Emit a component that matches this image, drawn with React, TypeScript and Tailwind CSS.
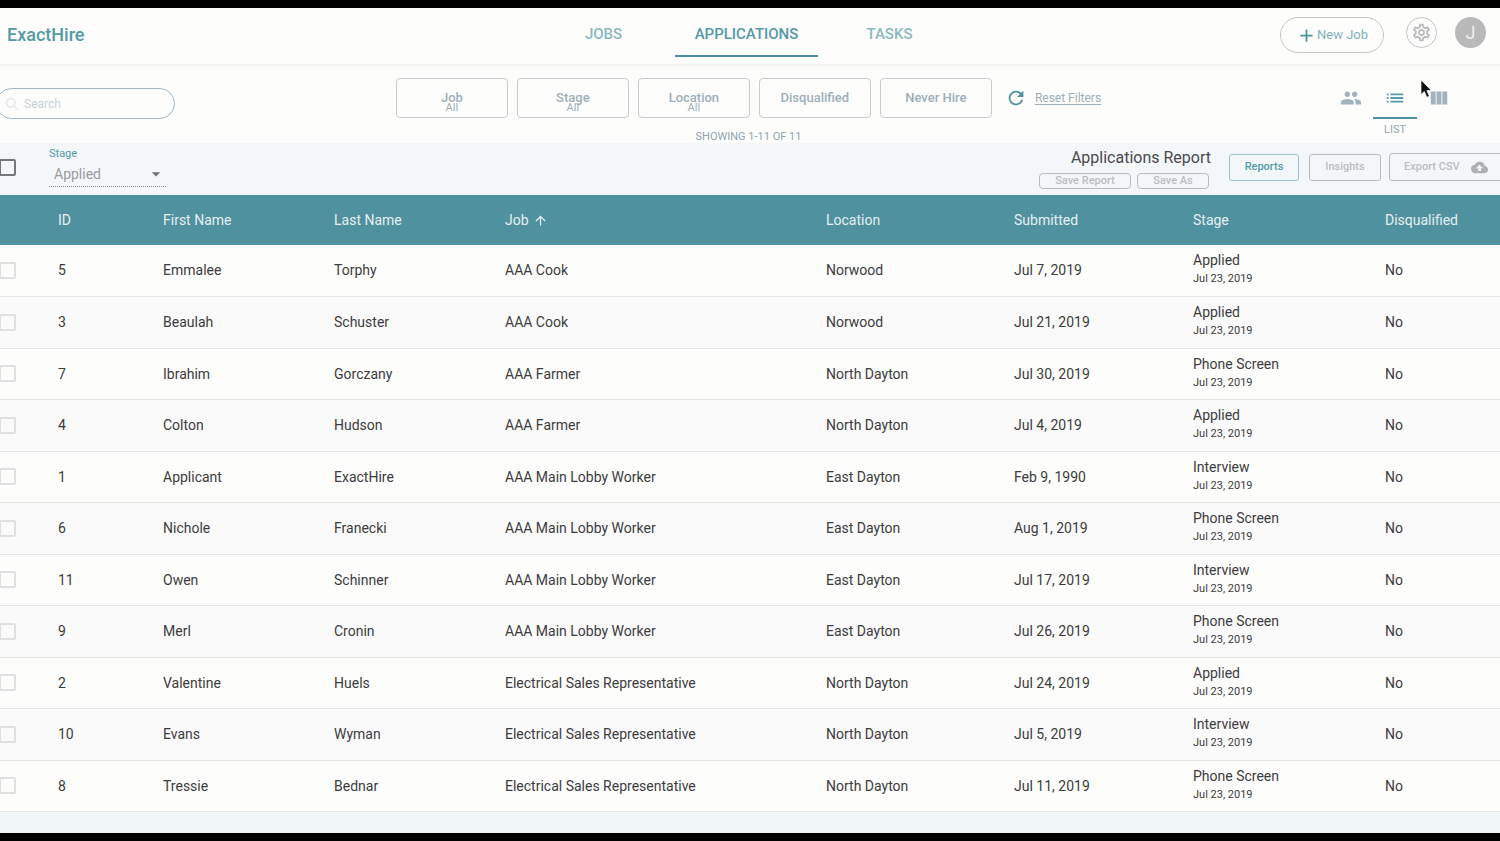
import React from "react";
import {
  MdAdd,
  MdArrowDropDown,
  MdArrowUpward,
  MdBackup,
  MdList,
  MdOutlineSettings,
  MdPeople,
  MdRefresh,
  MdViewColumn,
} from "react-icons/md";
import { IoIosSearch } from "react-icons/io";

type Application = {
  id: number;
  first: string;
  last: string;
  job: string;
  location: string;
  submitted: string;
  stage: string;
};

const COOK = "AAA Cook";
const FARMER = "AAA Farmer";
const LOBBY = "AAA Main Lobby Worker";
const SALES = "Electrical Sales Representative";

const applications: Application[] = [
  { id: 5, first: "Emmalee", last: "Torphy", job: COOK, location: "Norwood", submitted: "Jul 7, 2019", stage: "Applied" },
  { id: 3, first: "Beaulah", last: "Schuster", job: COOK, location: "Norwood", submitted: "Jul 21, 2019", stage: "Applied" },
  { id: 7, first: "Ibrahim", last: "Gorczany", job: FARMER, location: "North Dayton", submitted: "Jul 30, 2019", stage: "Phone Screen" },
  { id: 4, first: "Colton", last: "Hudson", job: FARMER, location: "North Dayton", submitted: "Jul 4, 2019", stage: "Applied" },
  { id: 1, first: "Applicant", last: "ExactHire", job: LOBBY, location: "East Dayton", submitted: "Feb 9, 1990", stage: "Interview" },
  { id: 6, first: "Nichole", last: "Franecki", job: LOBBY, location: "East Dayton", submitted: "Aug 1, 2019", stage: "Phone Screen" },
  { id: 11, first: "Owen", last: "Schinner", job: LOBBY, location: "East Dayton", submitted: "Jul 17, 2019", stage: "Interview" },
  { id: 9, first: "Merl", last: "Cronin", job: LOBBY, location: "East Dayton", submitted: "Jul 26, 2019", stage: "Phone Screen" },
  { id: 2, first: "Valentine", last: "Huels", job: SALES, location: "North Dayton", submitted: "Jul 24, 2019", stage: "Applied" },
  { id: 10, first: "Evans", last: "Wyman", job: SALES, location: "North Dayton", submitted: "Jul 5, 2019", stage: "Interview" },
  { id: 8, first: "Tressie", last: "Bednar", job: SALES, location: "North Dayton", submitted: "Jul 11, 2019", stage: "Phone Screen" },
];

const filters: { label: string; value?: string }[] = [
  { label: "Job", value: "All" },
  { label: "Stage", value: "All" },
  { label: "Location", value: "All" },
  { label: "Disqualified" },
  { label: "Never Hire" },
];

function Header() {
  return (
    <header className="grid grid-cols-[1fr_auto_1fr] border-b-2 border-[#f5f5f5] pr-[14px] pl-[7px]">
      <a href="#home" className="mt-4 text-lg leading-[22px] font-medium text-[#559aa8]">
        ExactHire
      </a>
      <nav className="grid grid-cols-[143px_143px_143px] text-center text-[15px] leading-5 font-medium text-[#8ab9c2]">
        <a href="#jobs" className="pt-4">
          JOBS
        </a>
        <a href="#applications" className="h-[49px] border-b-2 border-[#4d919f] pt-4 text-[#559aa8]">
          APPLICATIONS
        </a>
        <a href="#tasks" className="pt-4">
          TASKS
        </a>
      </nav>
      <div className="mt-[9px] mb-[11px] flex items-start justify-end">
        <button className="mr-[22px] flex h-9 w-[104px] items-center justify-center rounded-full border border-[#c6c6c8] text-[13px] text-[#7fb1bb]">
          <MdAdd className="size-[21px] text-[#4d919f]" />
          <span>New Job</span>
        </button>
        <button
          aria-label="Settings"
          className="mr-[18px] flex size-[31px] items-center justify-center rounded-full border border-[#c6c6c8] text-[#b9b9bb]"
        >
          <MdOutlineSettings className="size-[21px]" />
        </button>
        <button className="size-[31px] rounded-full bg-[#b9b9b9] text-lg text-[#f0f0f0]">J</button>
      </div>
    </header>
  );
}

function FilterBar() {
  return (
    <section className="grid grid-cols-[1fr_auto_1fr] pt-3 pr-[3px] text-[#90a4b0]">
      <label className="mt-[10px] -ml-1 flex h-[31px] w-[179px] items-center gap-1 rounded-full border border-[#9fb5c3] pl-[7px]">
        <IoIosSearch className="size-4 text-[#dde4ea]" />
        <input
          type="text"
          aria-label="Search"
          placeholder="Search"
          className="w-32 bg-transparent text-xs outline-none placeholder:text-[#c8d2da]"
        />
      </label>
      <div>
        <div className="flex items-center gap-[9px]">
          {filters.map((f) => (
            <button
              key={f.label}
              className="flex h-10 w-28 flex-col items-center justify-center rounded border border-[#cbcbcf] text-[13px] leading-[10px] font-medium text-[#9dafba]"
            >
              <span>{f.label}</span>
              {f.value && <span className="-mb-[10px] text-[11px] leading-[10px] font-normal">{f.value}</span>}
            </button>
          ))}
          <button className="ml-1 flex items-center gap-2 text-xs text-[#9dafba]">
            <MdRefresh className="size-[22px] text-[#4d919f]" />
            <span className="border-b border-[#9dafba] leading-3">Reset Filters</span>
          </button>
        </div>
        <p className="pt-3 text-center text-[11px] leading-[13px]">SHOWING 1-11 OF 11</p>
      </div>
      <div className="flex justify-end pr-9 text-[#a1b3be]">
        <button aria-label="People view" className="flex h-10 w-11 items-center justify-center">
          <MdPeople className="size-[22px]" />
        </button>
        <button className="flex w-11 flex-col items-center">
          <span className="flex h-[41px] w-full items-center justify-center border-b-2 border-[#4d919f] text-[#559aa8]">
            <MdList className="size-[22px]" />
          </span>
          <span className="mt-[5px] text-[11px] leading-3 text-[#90a4b0]">LIST</span>
        </button>
        <button aria-label="Board view" className="flex h-10 w-11 items-center justify-center">
          <MdViewColumn className="size-[22px]" />
        </button>
      </div>
    </section>
  );
}

function ReportBar() {
  return (
    <section className="flex h-[52px] items-start justify-between overflow-hidden bg-[#f4f7fa]">
      <div className="flex">
        <input
          type="checkbox"
          aria-label="Select all"
          className="mt-4 -ml-px size-[17px] appearance-none rounded-[2px] border-2 border-[#77777a]"
        />
        <div className="ml-[33px] w-[117px] border-b border-dotted border-[#8d8d90] pt-1">
          <label htmlFor="stage" className="block text-[11px] leading-[14px] text-[#559aa8]">
            Stage
          </label>
          <div className="grid items-center">
            <select
              id="stage"
              className="col-start-1 row-start-1 w-full appearance-none bg-transparent pt-px pl-[5px] text-sm leading-6 text-[#9a9a9d] outline-none"
            >
              <option>Applied</option>
              <option>Interview</option>
              <option>Phone Screen</option>
            </select>
            <MdArrowDropDown className="pointer-events-none col-start-1 row-start-1 size-5 justify-self-end text-[#6f6f72]" />
          </div>
        </div>
      </div>
      <div className="-mr-1 flex items-start text-[11px] font-medium text-[#bcbcbf]">
        <div className="mr-[18px] flex flex-col items-end pt-1">
          <h1 className="text-base leading-[21px] font-normal text-[#4a4a4d]">Applications Report</h1>
          <div className="mt-[5px] flex gap-[6px] pr-[2px] leading-[14px]">
            <button className="h-4 w-[92px] rounded border border-[#bcbcbf]">Save Report</button>
            <button className="h-4 w-[72px] rounded border border-[#bcbcbf]">Save As</button>
          </div>
        </div>
        <button className="mt-[11px] mr-[10px] h-[27px] w-[70px] rounded-[3px] border border-[#9cc4cd] text-[#559aa8]">
          Reports
        </button>
        <button className="mt-[11px] mr-2 h-[27px] w-[72px] rounded-[3px] border border-[#bcbcbf]">Insights</button>
        <button className="mt-[10px] flex h-7 w-[115px] items-center gap-[11px] rounded-[3px] border border-[#bcbcbf] pl-[14px]">
          Export CSV
          <MdBackup className="size-[17px] text-[#b0b0b2]" />
        </button>
      </div>
    </section>
  );
}

function ApplicationsTable() {
  return (
    <table className="w-full table-fixed border-collapse text-left text-sm text-[#3c3c3e]">
      <colgroup>
        <col className="w-[58px]" />
        <col className="w-[105px]" />
        <col className="w-[171px]" />
        <col className="w-[171px]" />
        <col className="w-[321px]" />
        <col className="w-[188px]" />
        <col className="w-[179px]" />
        <col className="w-[192px]" />
        <col className="w-[115px]" />
      </colgroup>
      <thead>
        <tr className="h-[50px] bg-[#4f919f] text-[#e6f0f2] *:p-0 *:font-normal">
          <td />
          <th>ID</th>
          <th>First Name</th>
          <th>Last Name</th>
          <th aria-sort="ascending">
            <span className="flex items-center gap-1">
              Job
              <MdArrowUpward className="size-[15px]" />
            </span>
          </th>
          <th>Location</th>
          <th>Submitted</th>
          <th>Stage</th>
          <th>Disqualified</th>
        </tr>
      </thead>
      <tbody>
        {applications.map((a) => (
          <tr
            key={a.id}
            className="border-b border-[#e6e6e7] *:p-0 odd:h-[51px] odd:bg-[#fdfdfb] even:h-[52px] even:bg-[#fafafa]"
          >
            <td>
              <input
                type="checkbox"
                aria-label={`Select ${a.first} ${a.last}`}
                className="-ml-px block size-[17px] appearance-none rounded-[2px] border-2 border-[#e0e0e0]"
              />
            </td>
            <td>{a.id}</td>
            <td>{a.first}</td>
            <td>{a.last}</td>
            <td>{a.job}</td>
            <td>{a.location}</td>
            <td>{a.submitted}</td>
            <td>
              <div className="leading-5">{a.stage}</div>
              <div className="pb-[2px] text-[11px] leading-[18px]">Jul 23, 2019</div>
            </td>
            <td>No</td>
          </tr>
        ))}
      </tbody>
    </table>
  );
}

export default function App() {
  return (
    <div className="relative min-h-screen overflow-hidden border-y-8 border-black bg-[#f1f6f9] font-['Roboto',sans-serif]">
      <div className="bg-[#fdfdfb]">
        <Header />
        <FilterBar />
      </div>
      <ReportBar />
      <ApplicationsTable />
      <svg
        aria-hidden="true"
        viewBox="0 0 12 20"
        className="pointer-events-none absolute top-[71px] right-[68px] h-5 w-3"
      >
        <path
          d="M1 1 L1 15.5 L4.3 12.5 L6.8 18.3 L9.4 17.2 L6.9 11.6 L11.2 11.3 Z"
          fill="#111"
          stroke="#fff"
          strokeWidth="0.7"
        />
      </svg>
    </div>
  );
}
